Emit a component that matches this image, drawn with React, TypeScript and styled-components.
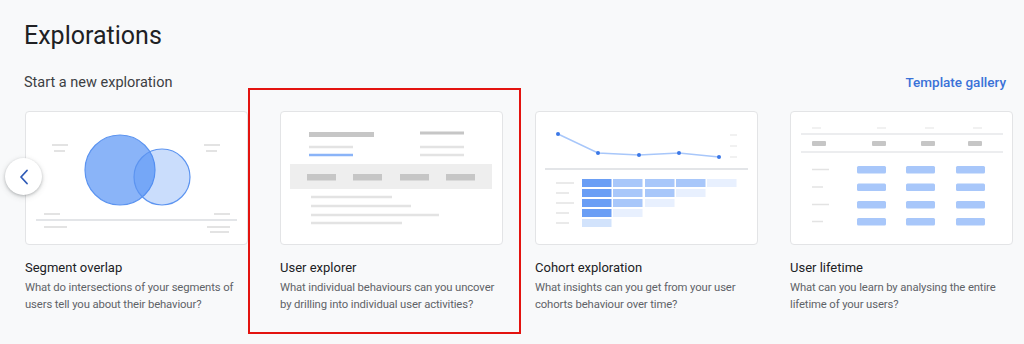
import React from "react";
import styled, { createGlobalStyle } from "styled-components";

const Global = createGlobalStyle`
  html, body { margin: 0; padding: 0; background: #f8f9fa; }
  body { font-family: Roboto, "Noto Sans", Arial, sans-serif; color: #202124; }
  * { box-sizing: border-box; }
`;

const Page = styled.div`
  position: relative;
  width: 1024px;
  height: 344px;
  overflow: hidden;
  padding: 20px 18px 0 24px;
  background: #f8f9fa;
`;

const Title = styled.h1`
  margin: 0;
  font-size: 25px;
  line-height: 32px;
  font-weight: 400;
  color: #202124;
`;

const SubHeader = styled.div`
  display: flex;
  align-items: center;
  justify-content: space-between;
  margin-top: 18px;
  height: 24px;
`;

const Subtitle = styled.div`
  font-size: 14.5px;
  color: #3c4043;
`;

const Link = styled.a`
  font-size: 13.5px;
  font-weight: 500;
  color: #3a72d8;
  text-decoration: none;
`;

const Carousel = styled.div`
  position: relative;
  display: flex;
  gap: 32px;
  margin-top: 17px;
  padding-left: 1px;
`;

const Item = styled.div`
  width: 223px;
  flex: none;
`;

const Card = styled.div`
  width: 223px;
  height: 134px;
  background: #fff;
  border: 1px solid #e3e4e6;
  border-radius: 4px;
  overflow: hidden;
  svg { display: block; }
`;

const ItemTitle = styled.div`
  margin-top: 14px;
  font-size: 13px;
  line-height: 18px;
  color: #202124;
`;

const ItemDesc = styled.div`
  margin-top: 2px;
  font-size: 11.3px;
  line-height: 17px;
  letter-spacing: -0.12px;
  white-space: nowrap;
  color: #5f6368;
`;

const ArrowButton = styled.button`
  position: absolute;
  left: -19px;
  top: 47px;
  width: 37px;
  height: 37px;
  border-radius: 50%;
  border: none;
  background: #fff;
  box-shadow: 0 1px 3px rgba(60, 64, 67, 0.3), 0 2px 6px rgba(60, 64, 67, 0.15);
  display: flex;
  align-items: center;
  justify-content: center;
  padding: 0;
`;

const Highlight = styled.div`
  position: absolute;
  left: 248px;
  top: 88px;
  width: 273px;
  height: 246px;
  border: 2.5px solid #e3130f;
  pointer-events: none;
`;

const G = "#e3e3e3";
const GD = "#c6c6c6";

const Seg = ({ x1, x2, y, c = G, w = 2 }: { x1: number; x2: number; y: number; c?: string; w?: number }) => (
  <line x1={x1} x2={x2} y1={y} y2={y} stroke={c} strokeWidth={w} />
);

const SegmentArt = () => (
  <svg width="221" height="132" viewBox="1 1 221 132">
    <Seg x1={27} x2={43} y={34} />
    <Seg x1={29} x2={40} y={40} />
    <Seg x1={179} x2={195} y={34} />
    <Seg x1={181} x2={192} y={40} />
    <circle cx={95} cy={59} r={35} fill="#8ab4f8" stroke="#5c94f0" strokeWidth={1.2} />
    <circle cx={137} cy={66} r={28} fill="#4285f4" fillOpacity={0.28} stroke="#5c94f0" strokeWidth={1.2} />
    <Seg x1={19} x2={35} y={103} />
    <Seg x1={189} x2={205} y={103} />
    <Seg x1={11} x2={212} y={109} c="#dadce0" w={1.3} />
    <Seg x1={19} x2={42} y={116} />
    <Seg x1={182} x2={205} y={116} />
    <Seg x1={185} x2={204} y={121} />
  </svg>
);

const ExplorerArt = () => (
  <svg width="221" height="132" viewBox="1 1 221 132">
    <Seg x1={29} x2={94} y={23.5} c={GD} w={5} />
    <Seg x1={140} x2={184} y={22} c={GD} w={3} />
    <Seg x1={29} x2={73} y={36} w={2.5} />
    <Seg x1={29} x2={73} y={44} c="#8ab4f8" w={2.5} />
    <Seg x1={140} x2={184} y={36} w={2.5} />
    <Seg x1={140} x2={184} y={44} w={2.5} />
    <rect x={10} y={53} width={202} height={25} fill="#eeeeee" />
    {[27, 73, 120, 166].map((x) => (
      <rect key={x} x={x} y={63} width={29} height={6.5} fill={GD} />
    ))}
    <Seg x1={31} x2={112} y={86} w={2.5} />
    <Seg x1={31} x2={131} y={95} w={2.5} />
    <Seg x1={31} x2={159} y={104} w={2.5} />
    <Seg x1={31} x2={122} y={112} w={2.5} />
  </svg>
);

const CohortArt = () => {
  const pts = [
    [23, 23],
    [63, 42],
    [104, 44],
    [144, 42],
    [184, 46],
  ];
  const dark = "#6a9ef5";
  const mid = "#a8c7fa";
  const light = "#e8f0fe";
  const rows = [
    [dark, mid, mid, mid, light],
    [dark, mid, mid, light],
    [dark, mid, light],
    [dark, light],
    ["#d2e3fc"],
  ];
  const cols = [47, 78, 110, 141, 172];
  const labels = [18, 13, 18, 13, 13];
  return (
    <svg width="221" height="132" viewBox="1 1 221 132">
      <polyline points={pts.map((p) => p.join(",")).join(" ")} fill="none" stroke="#a8c7fa" strokeWidth={1.5} />
      {pts.map(([x, y]) => (
        <circle key={x} cx={x} cy={y} r={2} fill="#3b78e7" />
      ))}
      <Seg x1={195} x2={202} y={24} w={1.2} />
      <Seg x1={195} x2={202} y={35} w={1.2} />
      <Seg x1={195} x2={202} y={46} w={1.2} />
      <Seg x1={10} x2={213} y={58} c="#dadce0" w={1.3} />
      {rows.map((r, i) => (
        <g key={i}>
          <Seg x1={21} x2={21 + labels[i]} y={72 + i * 10} w={1.5} />
          {r.map((c, j) => (
            <rect key={j} x={cols[j]} y={68 + i * 10} width={29.5} height={8} fill={c} />
          ))}
        </g>
      ))}
    </svg>
  );
};

const LifetimeArt = () => {
  const cols = [67, 116, 166];
  const rowsY = [55, 72.5, 90, 107];
  const labelW = [17, 11, 17, 11];
  return (
    <svg width="221" height="132" viewBox="1 1 221 132">
      <Seg x1={22} x2={31} y={17} w={1.2} />
      <Seg x1={87} x2={96} y={17} w={1.2} />
      <Seg x1={135} x2={144} y={17} w={1.2} />
      <Seg x1={183} x2={192} y={17} w={1.2} />
      <Seg x1={11} x2={213} y={23} c="#dadce0" w={1.2} />
      {[22, 82, 131, 178].map((x) => (
        <rect key={x} x={x} y={30} width={14} height={5} rx={1} fill={GD} />
      ))}
      <Seg x1={11} x2={213} y={41} c="#dadce0" w={1.2} />
      {rowsY.map((y, i) => (
        <g key={y}>
          <Seg x1={22} x2={22 + labelW[i]} y={y + 3.5} w={1.5} />
          {cols.map((x) => (
            <rect key={x} x={x} y={y} width={29} height={7.5} rx={1.5} fill="#a8c7fa" />
          ))}
        </g>
      ))}
    </svg>
  );
};

const items = [
  {
    title: "Segment overlap",
    desc: ["What do intersections of your segments of", "users tell you about their behaviour?"],
    Art: SegmentArt,
  },
  {
    title: "User explorer",
    desc: ["What individual behaviours can you uncover", "by drilling into individual user activities?"],
    Art: ExplorerArt,
  },
  {
    title: "Cohort exploration",
    desc: ["What insights can you get from your user", "cohorts behaviour over time?"],
    Art: CohortArt,
  },
  {
    title: "User lifetime",
    desc: ["What can you learn by analysing the entire", "lifetime of your users?"],
    Art: LifetimeArt,
  },
];

export default function App() {
  return (
    <Page>
      <Global />
      <Title>Explorations</Title>
      <SubHeader>
        <Subtitle>Start a new exploration</Subtitle>
        <Link href="#">Template gallery</Link>
      </SubHeader>
      <Carousel>
        {items.map(({ title, desc, Art }) => (
          <Item key={title}>
            <Card>
              <Art />
            </Card>
            <ItemTitle>{title}</ItemTitle>
            <ItemDesc>
              {desc[0]}
              <br />
              {desc[1]}
            </ItemDesc>
          </Item>
        ))}
        <ArrowButton aria-label="Previous">
          <svg width="20" height="20" viewBox="0 0 20 20">
            <polyline points="13,3.5 7,10 13,16.5" fill="none" stroke="#2f5bb7" strokeWidth={1.8} strokeLinecap="round" strokeLinejoin="round" />
          </svg>
        </ArrowButton>
      </Carousel>
      <Highlight />
    </Page>
  );
}
